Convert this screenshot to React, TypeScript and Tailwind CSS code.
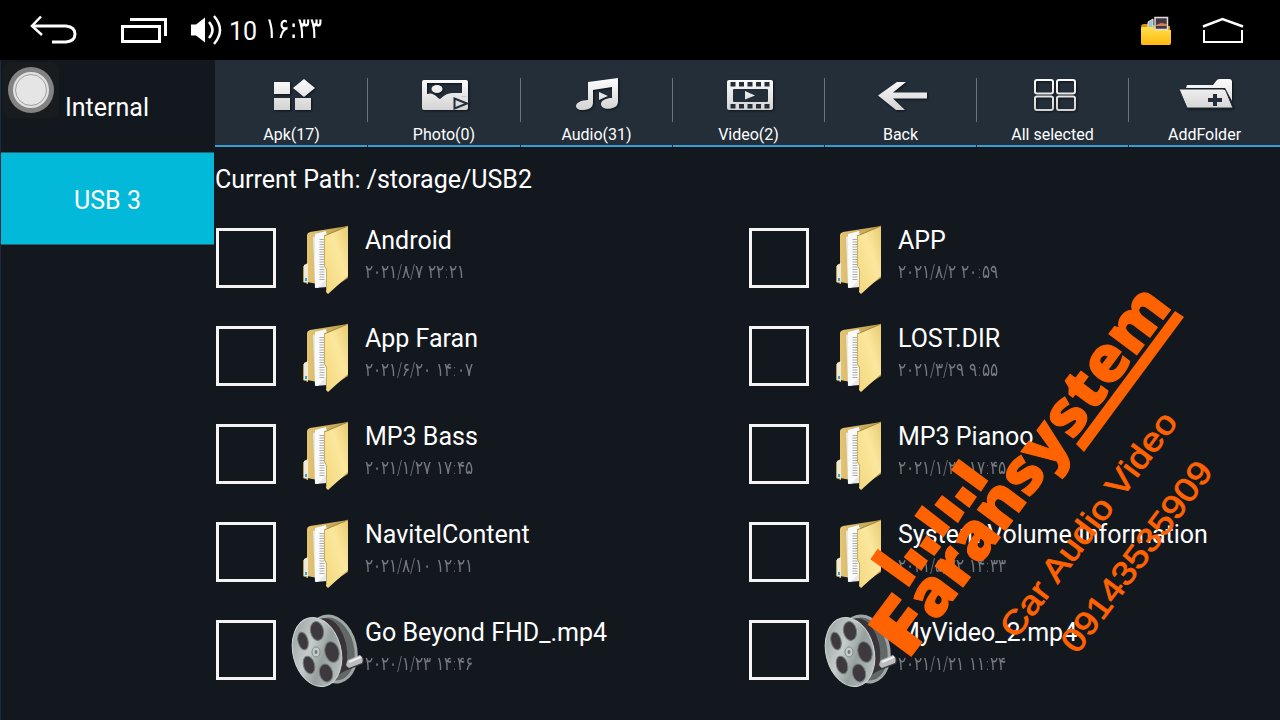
import React from 'react';

type FileEntry = {
  name: string;
  date: string;
  kind: 'folder' | 'video';
};

const files: FileEntry[] = [
  { name: 'Android', date: '۲۰۲۱/۸/۷ ۲۲:۲۱', kind: 'folder' },
  { name: 'APP', date: '۲۰۲۱/۸/۲ ۲۰:۵۹', kind: 'folder' },
  { name: 'App Faran', date: '۲۰۲۱/۶/۲۰ ۱۴:۰۷', kind: 'folder' },
  { name: 'LOST.DIR', date: '۲۰۲۱/۳/۲۹ ۹:۵۵', kind: 'folder' },
  { name: 'MP3 Bass', date: '۲۰۲۱/۱/۲۷ ۱۷:۴۵', kind: 'folder' },
  { name: 'MP3 Pianoo', date: '۲۰۲۱/۱/۲۸ ۱۷:۴۵', kind: 'folder' },
  { name: 'NavitelContent', date: '۲۰۲۱/۸/۱۰ ۱۲:۲۱', kind: 'folder' },
  { name: 'System Volume Information', date: '۲۰۲۱/۵/۲۲ ۱۴:۳۳', kind: 'folder' },
  { name: 'Go Beyond FHD_.mp4', date: '۲۰۲۰/۱/۲۳ ۱۴:۴۶', kind: 'video' },
  { name: 'MyVideo_2.mp4', date: '۲۰۲۱/۱/۲۱ ۱۱:۲۴', kind: 'video' },
];

const ApkIcon = () => (
  <g>
    <path d="M6 5h16v12H6zM6 21h16v12H6zM27 21h16v12H27z" />
    <path d="M36 2l11 9-11 9-11-9z" />
  </g>
);

const PhotoIcon = () => (
  <g>
    <path
      fillRule="evenodd"
      d="M4 3h42a2 2 0 012 2v15L33 19v14H4a2 2 0 01-2-2V5a2 2 0 012-2zM7 6v11q6-2 11 4l2 1q7-7 14-6h8V6z"
    />
    <path d="M32 18l16 2v11a2 2 0 01-2 2H32z" />
    <ellipse cx="17" cy="12" rx="5.500" ry="4" />
    <path d="M34.500 21.500v10L47 26.500z" stroke="#232e39" strokeWidth="2" />
  </g>
);

const AudioIcon = () => (
  <g>
    <path
      fillRule="evenodd"
      d="M15 5L45 1v24q0 5-7 6.500c-6 1-10-1-10-4.500s5-6 11-6V10l-19 3v13q0 6-9 7C5 33.500 3 31 3 29c0-3 5-6 12-6z"
    />
    <path d="M26 15l9 4-9 4z" />
  </g>
);

const VideoIcon = () => (
  <g>
    <rect x="2" y="3" width="46" height="30" rx="2" />
    <g fill="#232e39">
      <path d="M5.500 5h5v4.500h-5zM14 5h5v4.500h-5zM22.500 5h5v4.500h-5zM31 5h5v4.500h-5zM39.500 5h5v4.500h-5z" />
      <path d="M5.500 27h5v4.500h-5zM14 27h5v4.500h-5zM22.500 27h5v4.500h-5zM31 27h5v4.500h-5zM39.500 27h5v4.500h-5z" />
      <rect x="8" y="12" width="35" height="13" rx="1" />
    </g>
    <path d="M20 14l10 4.500-10 4z" />
  </g>
);

const BackIcon = () => <path d="M1 18.500L20 5h9L16 15.500h34v6H16L28 33h-9z" />;

const SelectIcon = () => (
  <g fill="none" stroke="url(#silver)" strokeWidth="2">
    <rect x="6" y="3" width="18" height="13.500" rx="2" />
    <rect x="28" y="3" width="18" height="13.500" rx="2" />
    <rect x="6" y="19.500" width="18" height="13.500" rx="2" />
    <rect x="28" y="19.500" width="18" height="13.500" rx="2" />
  </g>
);

const AddFolderIcon = () => (
  <g transform="translate(-1)">
    <path d="M6 11l1-3h26l4-5q1-1 3-1h9q3 0 3 3v19l-7-13z" />
    <path d="M-1 12h44q2 0 3 2l7 17H7z" stroke="#232e39" strokeWidth="1" />
    <path d="M33 17h4v4h5v4h-5v4h-4v-4h-5v-4h5z" fill="#232e39" />
  </g>
);

const tools = [
  { label: 'Apk(17)', icon: <ApkIcon /> },
  { label: 'Photo(0)', icon: <PhotoIcon /> },
  { label: 'Audio(31)', icon: <AudioIcon /> },
  { label: 'Video(2)', icon: <VideoIcon /> },
  { label: 'Back', icon: <BackIcon /> },
  { label: 'All selected', icon: <SelectIcon /> },
  { label: 'AddFolder', icon: <AddFolderIcon /> },
];

const FolderIcon = () => (
  <svg width="70" height="80" viewBox="-1 0 70 80">
    <path d="M16 15q0-2 3-3l38-6v52l-14 9-27-5z" fill="url(#folderBack)" />
    <path d="M13 45l4-2v21l-4-2z" fill="#eee9d8" />
    <path d="M12.500 46v16l4 1" fill="none" stroke="#b89d52" strokeWidth="1" />
    <path d="M14 58h2v3h-2z" fill="#33a3d8" />
    <path d="M22 17l14-4v54l-12 1z" fill="#e9e9ea" />
    <path d="M24 14l11-3v48l-8 9-3-1z" fill="#fafafa" />
    <path d="M31 19v42" stroke="#8b8b8e" strokeWidth="5" strokeDasharray="1 1.500" opacity=".7" />
    <path d="M34 16l23-10v50L37 74l-2-2V49l-2-3z" fill="url(#folderFront)" />
    <path d="M33 16l24-10" stroke="#a68a3e" strokeWidth="1" />
    <path d="M33.500 16v30l2 3v22" fill="none" stroke="#cdae58" strokeWidth="1" />
  </svg>
);

const ReelIcon = () => (
  <svg width="76" height="80" viewBox="1 1 76 80">
    <ellipse cx="43" cy="38" rx="25" ry="35" transform="rotate(-14 43 38)" fill="#9fa7a7" />
    <ellipse cx="43" cy="38" rx="22" ry="32" transform="rotate(-14 43 38)" fill="#626867" />
    <path d="M30 8q12-3 20 8 10 16 8 34l15-5q3 3 1 8l-18 7-14 8z" fill="#383439" />
    <path d="M59 49l12-5q4 3 2 8l-13 5q-5-3-1-8z" fill="#b9bdbe" />
    <path d="M60 51l12-5" stroke="#eee" strokeWidth="2" />
    <ellipse cx="28" cy="41" rx="24" ry="35" transform="rotate(-14 28 41)" fill="url(#reel)" stroke="#d3d8d8" strokeWidth="1" />
    <g fill="#3d393e" stroke="#737b7a" strokeWidth="1">
      <ellipse cx="28" cy="20" rx="6.500" ry="9.500" transform="rotate(-12 28 20)" />
      <ellipse cx="14" cy="30" rx="5" ry="9" transform="rotate(-14 14 30)" />
      <ellipse cx="43" cy="41" rx="7" ry="10.500" transform="rotate(-14 43 41)" />
      <ellipse cx="20" cy="54" rx="5.500" ry="9" transform="rotate(-16 20 54)" />
      <ellipse cx="37" cy="62" rx="6.500" ry="9" transform="rotate(-14 37 62)" />
    </g>
    <ellipse cx="27" cy="41" rx="4" ry="5" fill="#c6cccc" stroke="#818a89" />
    <ellipse cx="27" cy="41" rx="1.500" ry="2" fill="#727a79" />
  </svg>
);

const StatusBar = () => (
  <header className="flex h-[60px] shrink-0 items-center bg-black text-white">
    <svg className="ml-[28px]" width="52" height="60" viewBox="0 0 52 60" fill="none" stroke="#fff">
      <path d="M4 26h34q9 1 9 8 0 7-9 8H24" strokeWidth="3" />
      <path d="M13 16.500L4 26l10 9" strokeWidth="2.500" />
    </svg>
    <svg className="ml-[39px]" width="50" height="60" viewBox="0 0 50 60" fill="none" stroke="#fff" strokeWidth="3">
      <path d="M3.500 26.500h37v15h-37z" />
      <path d="M11 19.500h35.500V36" strokeWidth="3" />
    </svg>
    <svg className="ml-[21px]" width="34" height="60" viewBox="0 0 34 60" fill="none" stroke="#fff" strokeWidth="2.500">
      <path d="M1 24.500h5l9-7v25l-9-7H1z" fill="#fff" stroke="none" />
      <path d="M19 22q7 8 0 16M24 16q12 14 0 28" />
    </svg>
    <span className="mt-[3px] ml-[5px] w-[36px] text-[25px]">10</span>
    <span className="-mt-[4px] scale-y-125 font-['DejaVu_Sans'] text-[23px] tracking-[-1.5px]">۱۶:۳۳</span>
    <svg className="ml-auto" width="34" height="60" viewBox="0 0 34 60">
      <path d="M1 27q0-3 3-3h8l3 2h15V43q0 2-2 2H3q-2 0-2-2z" fill="#d99509" />
      <path d="M8 22l5-3v9H8z" fill="#9dc0d6" stroke="#e5e5e5" />
      <path d="M1 29q0-2 2-2h10l2 3h16v13q0 2-2 2H3q-2 0-2-2z" fill="url(#yellow)" />
      <path d="M15 17.500h12.500v12H15z" fill="#473640" stroke="#ddd" strokeWidth="1.500" />
      <path d="M16 25l5-2 6 1v2H16z" fill="#ca8554" />
    </svg>
    <svg className="mr-[35px] ml-[26px]" width="45" height="60" viewBox="0 0 45 60" fill="none" stroke="#fff">
      <path d="M3 26.500L22.500 19 43 26.500" strokeWidth="2.500" />
      <path d="M4 30v12h38V30" strokeWidth="2" />
    </svg>
  </header>
);

const Sidebar = () => (
  <aside className="w-[215px] shrink-0 border-l border-[#1c2b3d] pr-px">
    <div className="relative flex h-[92px] items-center pt-[3px] pl-16 text-[25px] text-white">
      Internal
      <div className="absolute top-[2px] left-[2px] flex h-14 w-14 items-center justify-center rounded-lg bg-[#191c1f]">
        <div className="flex h-[46px] w-[46px] items-center justify-center rounded-full bg-[#838383]">
          <div className="flex h-9 w-9 items-center justify-center rounded-full bg-[#e2e2e2]">
            <div className="h-8 w-8 rounded-full border border-[#a0a0a0] bg-[#e5e5e5]" />
          </div>
        </div>
      </div>
    </div>
    <div className="flex h-[93px] items-center justify-center border-y border-[#28616f] bg-[#03b9da] pt-[4px] text-[25px] text-white">
      USB 3
    </div>
  </aside>
);

const Toolbar = () => (
  <nav className="grid h-[87px] shrink-0 grid-cols-[152px_153px_152px_152px_152px_152px_152px] bg-[#232e39]">
    {tools.map((tool, i) => (
      <div key={tool.label} className="relative flex flex-col items-center border-b-2 border-[#36a0d4] pt-[17px]">
        {i > 0 && <span className="absolute top-[18px] left-0 h-11 w-px bg-[#6b747c]" />}
        {i > 0 && <span className="absolute -bottom-[2px] left-0 h-[2px] w-px bg-[#232e39]" />}
        <svg
          className="ml-[5px] overflow-visible drop-shadow-[1px_1px_1px_#0009]"
          width="52"
          height="38"
          viewBox="0 0 52 38"
          fill="url(#silver)"
        >
          {tool.icon}
        </svg>
        <span className="mt-[10px] ml-px text-[16px] leading-5 text-white">{tool.label}</span>
      </div>
    ))}
  </nav>
);

const FileRow = ({ file }: { file: FileEntry }) => (
  <div className="flex h-[98px] items-start pl-px">
    <div className="mt-[19px] h-[60px] w-[60px] shrink-0 border-[3px] border-[#f4f4f4]" />
    <div className="mt-[11px] ml-[14px] w-[75px] shrink-0">
      {file.kind === 'folder' ? <FolderIcon /> : <ReelIcon />}
    </div>
    <div className="pt-[17px] whitespace-nowrap">
      <p className="text-[25px] leading-[30px] text-white">{file.name}</p>
      <p className="mt-px origin-center scale-y-125 font-['DejaVu_Sans'] text-[15px] leading-[30px] font-extralight tracking-[-0.9px] text-[#777a7e]">
        {file.date}
      </p>
    </div>
  </div>
);

// Dealer branding floating over the file list
const Branding = () => (
  <svg className="pointer-events-none absolute top-0 left-0" width="1280" height="720" viewBox="0 0 1280 720" fill="#ff6200">
    <g transform="translate(862 450) scale(.33333)">
      <path d="M25 328L47 296 162 380 142 412z" />
      <path d="M125 322L147 293 198 332 178 363z" />
      <path d="M172 288L194 255 238 290 217 318z" />
      <path d="M157 198L180 165 265 232 245 262z" />
      <path d="M217 165L240 135 308 187 288 220z" />
      <path d="M278 140L302 108 345 140 322 174z" />
      <path d="M267 60L290 26 379 92 357 125z" />
    </g>
    <g transform="translate(910 658) rotate(-53.2)" fontFamily="'Open Sans'" fontWeight="800" stroke="#ff6200">
      <text x="-5" y="0" fontSize="75" strokeWidth="1" textLength="50" lengthAdjust="spacingAndGlyphs">F</text>
      <text x="44" y="0" fontSize="63" strokeWidth="1" textLength="395" lengthAdjust="spacingAndGlyphs">aransystem</text>
    </g>
    <path d="M1076 444L1175 311 1184 317 1084 452z" />
    <g fontFamily="'Liberation Sans'" fontSize="33" stroke="#ff6200" strokeWidth="0.8">
      <text transform="translate(1016 640) rotate(-53.2)" textLength="272" lengthAdjust="spacingAndGlyphs">Car Audio Video</text>
      <text transform="translate(1077 655) rotate(-53.2)" textLength="229" lengthAdjust="spacingAndGlyphs">09143535909</text>
    </g>
  </svg>
);

const Gradients = () => (
  <svg className="absolute" width="0" height="0">
    <defs>
      <linearGradient id="silver" gradientUnits="userSpaceOnUse" x1="0" y1="0" x2="0" y2="36">
        <stop offset="0" stopColor="#ffffff" />
        <stop offset="1" stopColor="#cfcfcf" />
      </linearGradient>
      <linearGradient id="folderBack" x1="0" y1="0" x2="1" y2="0">
        <stop offset="0" stopColor="#e3c574" />
        <stop offset="1" stopColor="#b99a4a" />
      </linearGradient>
      <linearGradient id="folderFront" x1="0" y1="1" x2="1" y2="0">
        <stop offset="0" stopColor="#f2d67c" />
        <stop offset=".6" stopColor="#fbe79d" />
        <stop offset="1" stopColor="#e8cb72" />
      </linearGradient>
      <linearGradient id="reel" x1="0" y1="0" x2="1" y2="1">
        <stop offset="0" stopColor="#8e9796" />
        <stop offset=".4" stopColor="#c5cccb" />
        <stop offset=".6" stopColor="#959f9e" />
        <stop offset="1" stopColor="#c8cfce" />
      </linearGradient>
      <linearGradient id="yellow" x1="0" y1="0" x2="0" y2="1">
        <stop offset="0" stopColor="#ffe04c" />
        <stop offset="1" stopColor="#ffb710" />
      </linearGradient>
    </defs>
  </svg>
);

const App = () => {
  return (
    <div className="relative flex h-[720px] w-[1280px] flex-col overflow-hidden bg-[#13181f] font-['Roboto',sans-serif]">
      <Gradients />
      <StatusBar />
      <div className="flex flex-1">
        <Sidebar />
        <main className="flex min-w-0 flex-1 flex-col">
          <Toolbar />
          <h1 className="h-[62px] pt-[17px] text-[25px] leading-[31px] text-white">Current Path: /storage/USB2</h1>
          <div className="grid grid-cols-[533px_532px]">
            {files.map((file) => (
              <FileRow key={file.name} file={file} />
            ))}
          </div>
        </main>
      </div>
      <Branding />
    </div>
  );
};

export default App;
